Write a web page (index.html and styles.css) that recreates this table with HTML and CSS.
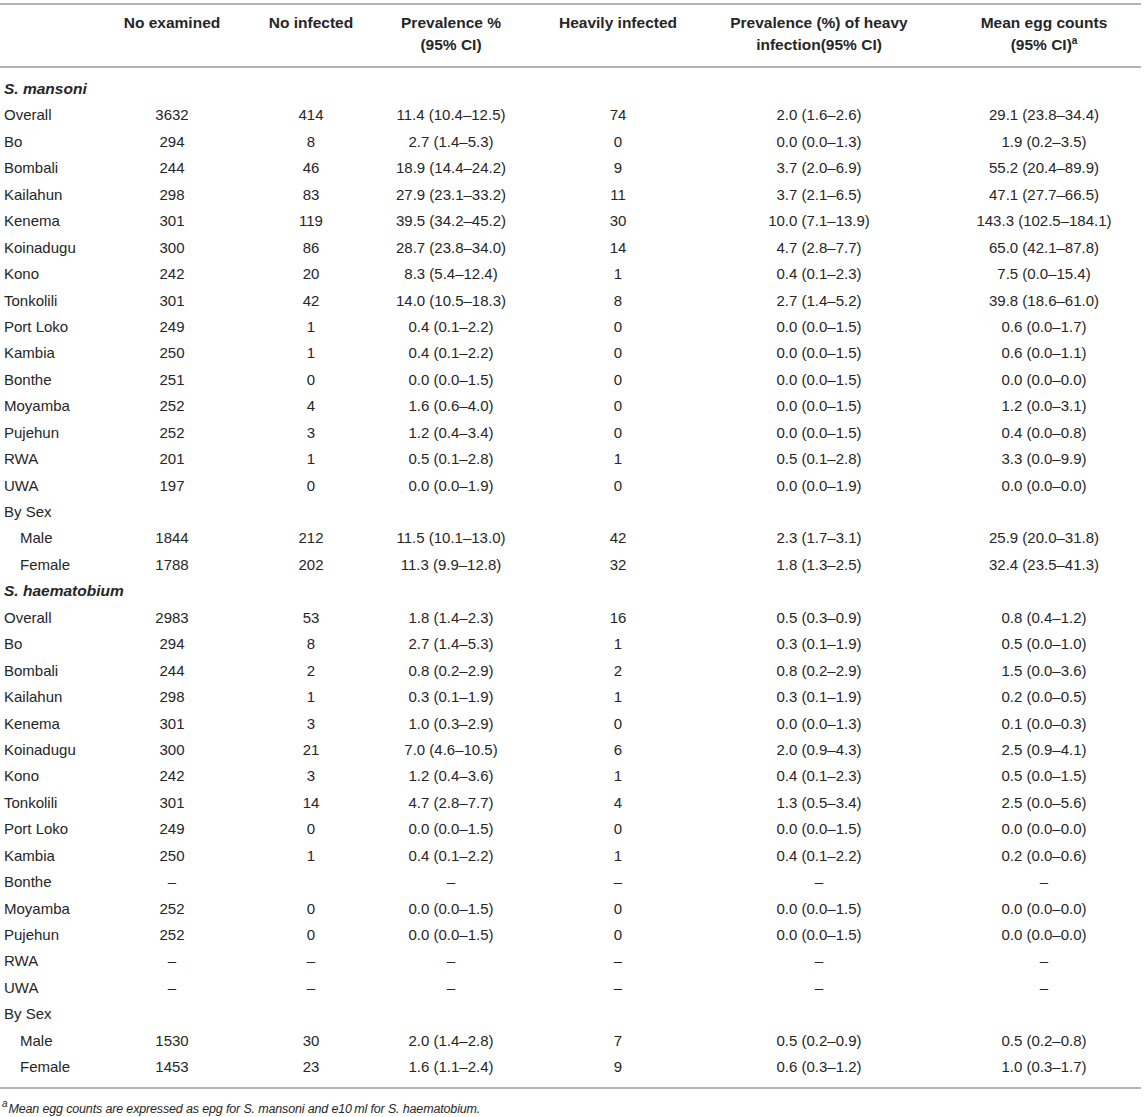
FILE: index.html
```html
<!DOCTYPE html>
<html lang="en">
  <head>
    <meta charset="UTF-8" />
    <title>Schistosomiasis prevalence</title>
    <link rel="stylesheet" href="styles.css">
  </head>
  <body>
    <table class="data">
      <colgroup>
        <col class="c-label" />
        <col class="c-1" />
        <col class="c-2" />
        <col class="c-3" />
        <col class="c-4" />
        <col class="c-5" />
        <col class="c-6" />
      </colgroup>
      <thead>
        <tr>
          <th></th>
          <th>No examined</th>
          <th>No infected</th>
          <th>Prevalence %<br />(95% CI)</th>
          <th>Heavily infected</th>
          <th>Prevalence (%) of heavy<br />infection(95% CI)</th>
          <th class="last">Mean egg counts<br />(95% CI)<sup>a</sup></th>
        </tr>
      </thead>
      <tbody>
        <!-- S. mansoni -->
        <tr class="group first"><td colspan="7"><b><i>S. mansoni</i></b></td></tr>
        <tr><td>Overall</td><td>3632</td><td>414</td><td>11.4 (10.4–12.5)</td><td>74</td><td>2.0 (1.6–2.6)</td><td class="last">29.1 (23.8–34.4)</td></tr>
        <tr><td>Bo</td><td>294</td><td>8</td><td>2.7 (1.4–5.3)</td><td>0</td><td>0.0 (0.0–1.3)</td><td class="last">1.9 (0.2–3.5)</td></tr>
        <tr><td>Bombali</td><td>244</td><td>46</td><td>18.9 (14.4–24.2)</td><td>9</td><td>3.7 (2.0–6.9)</td><td class="last">55.2 (20.4–89.9)</td></tr>
        <tr><td>Kailahun</td><td>298</td><td>83</td><td>27.9 (23.1–33.2)</td><td>11</td><td>3.7 (2.1–6.5)</td><td class="last">47.1 (27.7–66.5)</td></tr>
        <tr><td>Kenema</td><td>301</td><td>119</td><td>39.5 (34.2–45.2)</td><td>30</td><td>10.0 (7.1–13.9)</td><td class="last">143.3 (102.5–184.1)</td></tr>
        <tr><td>Koinadugu</td><td>300</td><td>86</td><td>28.7 (23.8–34.0)</td><td>14</td><td>4.7 (2.8–7.7)</td><td class="last">65.0 (42.1–87.8)</td></tr>
        <tr><td>Kono</td><td>242</td><td>20</td><td>8.3 (5.4–12.4)</td><td>1</td><td>0.4 (0.1–2.3)</td><td class="last">7.5 (0.0–15.4)</td></tr>
        <tr><td>Tonkolili</td><td>301</td><td>42</td><td>14.0 (10.5–18.3)</td><td>8</td><td>2.7 (1.4–5.2)</td><td class="last">39.8 (18.6–61.0)</td></tr>
        <tr><td>Port Loko</td><td>249</td><td>1</td><td>0.4 (0.1–2.2)</td><td>0</td><td>0.0 (0.0–1.5)</td><td class="last">0.6 (0.0–1.7)</td></tr>
        <tr><td>Kambia</td><td>250</td><td>1</td><td>0.4 (0.1–2.2)</td><td>0</td><td>0.0 (0.0–1.5)</td><td class="last">0.6 (0.0–1.1)</td></tr>
        <tr><td>Bonthe</td><td>251</td><td>0</td><td>0.0 (0.0–1.5)</td><td>0</td><td>0.0 (0.0–1.5)</td><td class="last">0.0 (0.0–0.0)</td></tr>
        <tr><td>Moyamba</td><td>252</td><td>4</td><td>1.6 (0.6–4.0)</td><td>0</td><td>0.0 (0.0–1.5)</td><td class="last">1.2 (0.0–3.1)</td></tr>
        <tr><td>Pujehun</td><td>252</td><td>3</td><td>1.2 (0.4–3.4)</td><td>0</td><td>0.0 (0.0–1.5)</td><td class="last">0.4 (0.0–0.8)</td></tr>
        <tr><td>RWA</td><td>201</td><td>1</td><td>0.5 (0.1–2.8)</td><td>1</td><td>0.5 (0.1–2.8)</td><td class="last">3.3 (0.0–9.9)</td></tr>
        <tr><td>UWA</td><td>197</td><td>0</td><td>0.0 (0.0–1.9)</td><td>0</td><td>0.0 (0.0–1.9)</td><td class="last">0.0 (0.0–0.0)</td></tr>
        <tr><td colspan="7">By Sex</td></tr>
        <tr><td class="sub">Male</td><td>1844</td><td>212</td><td>11.5 (10.1–13.0)</td><td>42</td><td>2.3 (1.7–3.1)</td><td class="last">25.9 (20.0–31.8)</td></tr>
        <tr><td class="sub">Female</td><td>1788</td><td>202</td><td>11.3 (9.9–12.8)</td><td>32</td><td>1.8 (1.3–2.5)</td><td class="last">32.4 (23.5–41.3)</td></tr>

        <!-- S. haematobium -->
        <tr class="group"><td colspan="7"><b><i>S. haematobium</i></b></td></tr>
        <tr><td>Overall</td><td>2983</td><td>53</td><td>1.8 (1.4–2.3)</td><td>16</td><td>0.5 (0.3–0.9)</td><td class="last">0.8 (0.4–1.2)</td></tr>
        <tr><td>Bo</td><td>294</td><td>8</td><td>2.7 (1.4–5.3)</td><td>1</td><td>0.3 (0.1–1.9)</td><td class="last">0.5 (0.0–1.0)</td></tr>
        <tr><td>Bombali</td><td>244</td><td>2</td><td>0.8 (0.2–2.9)</td><td>2</td><td>0.8 (0.2–2.9)</td><td class="last">1.5 (0.0–3.6)</td></tr>
        <tr><td>Kailahun</td><td>298</td><td>1</td><td>0.3 (0.1–1.9)</td><td>1</td><td>0.3 (0.1–1.9)</td><td class="last">0.2 (0.0–0.5)</td></tr>
        <tr><td>Kenema</td><td>301</td><td>3</td><td>1.0 (0.3–2.9)</td><td>0</td><td>0.0 (0.0–1.3)</td><td class="last">0.1 (0.0–0.3)</td></tr>
        <tr><td>Koinadugu</td><td>300</td><td>21</td><td>7.0 (4.6–10.5)</td><td>6</td><td>2.0 (0.9–4.3)</td><td class="last">2.5 (0.9–4.1)</td></tr>
        <tr><td>Kono</td><td>242</td><td>3</td><td>1.2 (0.4–3.6)</td><td>1</td><td>0.4 (0.1–2.3)</td><td class="last">0.5 (0.0–1.5)</td></tr>
        <tr><td>Tonkolili</td><td>301</td><td>14</td><td>4.7 (2.8–7.7)</td><td>4</td><td>1.3 (0.5–3.4)</td><td class="last">2.5 (0.0–5.6)</td></tr>
        <tr><td>Port Loko</td><td>249</td><td>0</td><td>0.0 (0.0–1.5)</td><td>0</td><td>0.0 (0.0–1.5)</td><td class="last">0.0 (0.0–0.0)</td></tr>
        <tr><td>Kambia</td><td>250</td><td>1</td><td>0.4 (0.1–2.2)</td><td>1</td><td>0.4 (0.1–2.2)</td><td class="last">0.2 (0.0–0.6)</td></tr>
        <tr><td>Bonthe</td><td>–</td><td></td><td>–</td><td>–</td><td>–</td><td class="last">–</td></tr>
        <tr><td>Moyamba</td><td>252</td><td>0</td><td>0.0 (0.0–1.5)</td><td>0</td><td>0.0 (0.0–1.5)</td><td class="last">0.0 (0.0–0.0)</td></tr>
        <tr><td>Pujehun</td><td>252</td><td>0</td><td>0.0 (0.0–1.5)</td><td>0</td><td>0.0 (0.0–1.5)</td><td class="last">0.0 (0.0–0.0)</td></tr>
        <tr><td>RWA</td><td>–</td><td>–</td><td>–</td><td>–</td><td>–</td><td class="last">–</td></tr>
        <tr><td>UWA</td><td>–</td><td>–</td><td>–</td><td>–</td><td>–</td><td class="last">–</td></tr>
        <tr><td colspan="7">By Sex</td></tr>
        <tr><td class="sub">Male</td><td>1530</td><td>30</td><td>2.0 (1.4–2.8)</td><td>7</td><td>0.5 (0.2–0.9)</td><td class="last">0.5 (0.2–0.8)</td></tr>
        <tr class="end"><td class="sub">Female</td><td>1453</td><td>23</td><td>1.6 (1.1–2.4)</td><td>9</td><td>0.6 (0.3–1.2)</td><td class="last">1.0 (0.3–1.7)</td></tr>
      </tbody>
    </table>

    <p class="note"><sup>a</sup><i>Mean egg counts are expressed as epg for S. mansoni and e10&#8201;ml for S. haematobium.</i></p>
  </body>
</html>
```

FILE: styles.css
```css
:root {
  --text: #262626;
  --rule: #b4b4b4;
  --row-height: 26.44px;
}
body {
  margin: 0;
  padding-top: 3px;
  background: #ffffff;
  color: var(--text);
  font-family: "Liberation Sans", Arial, sans-serif;
}

.data {
  width: 1141px;
  table-layout: fixed;
  border-collapse: separate;
  border-spacing: 0;
  font-size: 15px;
}
.c-label {
  width: 100px;
}
.c-1 {
  width: 144px;
}
.c-2 {
  width: 134px;
}
.c-3 {
  width: 146px;
}
.c-4 {
  width: 188px;
}
.c-5 {
  width: 214px;
}
.c-6 {
  width: 215px;
}

.data th {
  font-size: 15.5px;
  font-weight: bold;
  line-height: 22px;
  text-align: center;
  vertical-align: top;
  padding: 7px 0 10px;
  border-top: 2px solid var(--rule);
  border-bottom: 2px solid var(--rule);
}
.data th sup {
  font-size: 10px;
  line-height: 0;
}

.data td {
  line-height: var(--row-height);
  padding: 0;
  text-align: center;
  white-space: nowrap;
}
.data td:first-child {
  text-align: left;
  padding-left: 4px;
}
.data td.sub {
  padding-left: 20px;
}
.data .last {
  padding-left: 21px;
}

.data .group td {
  font-size: 15.5px;
}
.data .group.first td {
  padding-top: 8px;
}
.data .end td {
  padding-bottom: 6px;
  border-bottom: 2px solid var(--rule);
}

.note {
  margin: 12px 0 0 2px;
  font-size: 12.5px;
  line-height: 16px;
  letter-spacing: -0.15px;
}
.note sup {
  font-size: 10px;
  line-height: 0;
  font-style: italic;
  margin-right: 1px;
}
```
